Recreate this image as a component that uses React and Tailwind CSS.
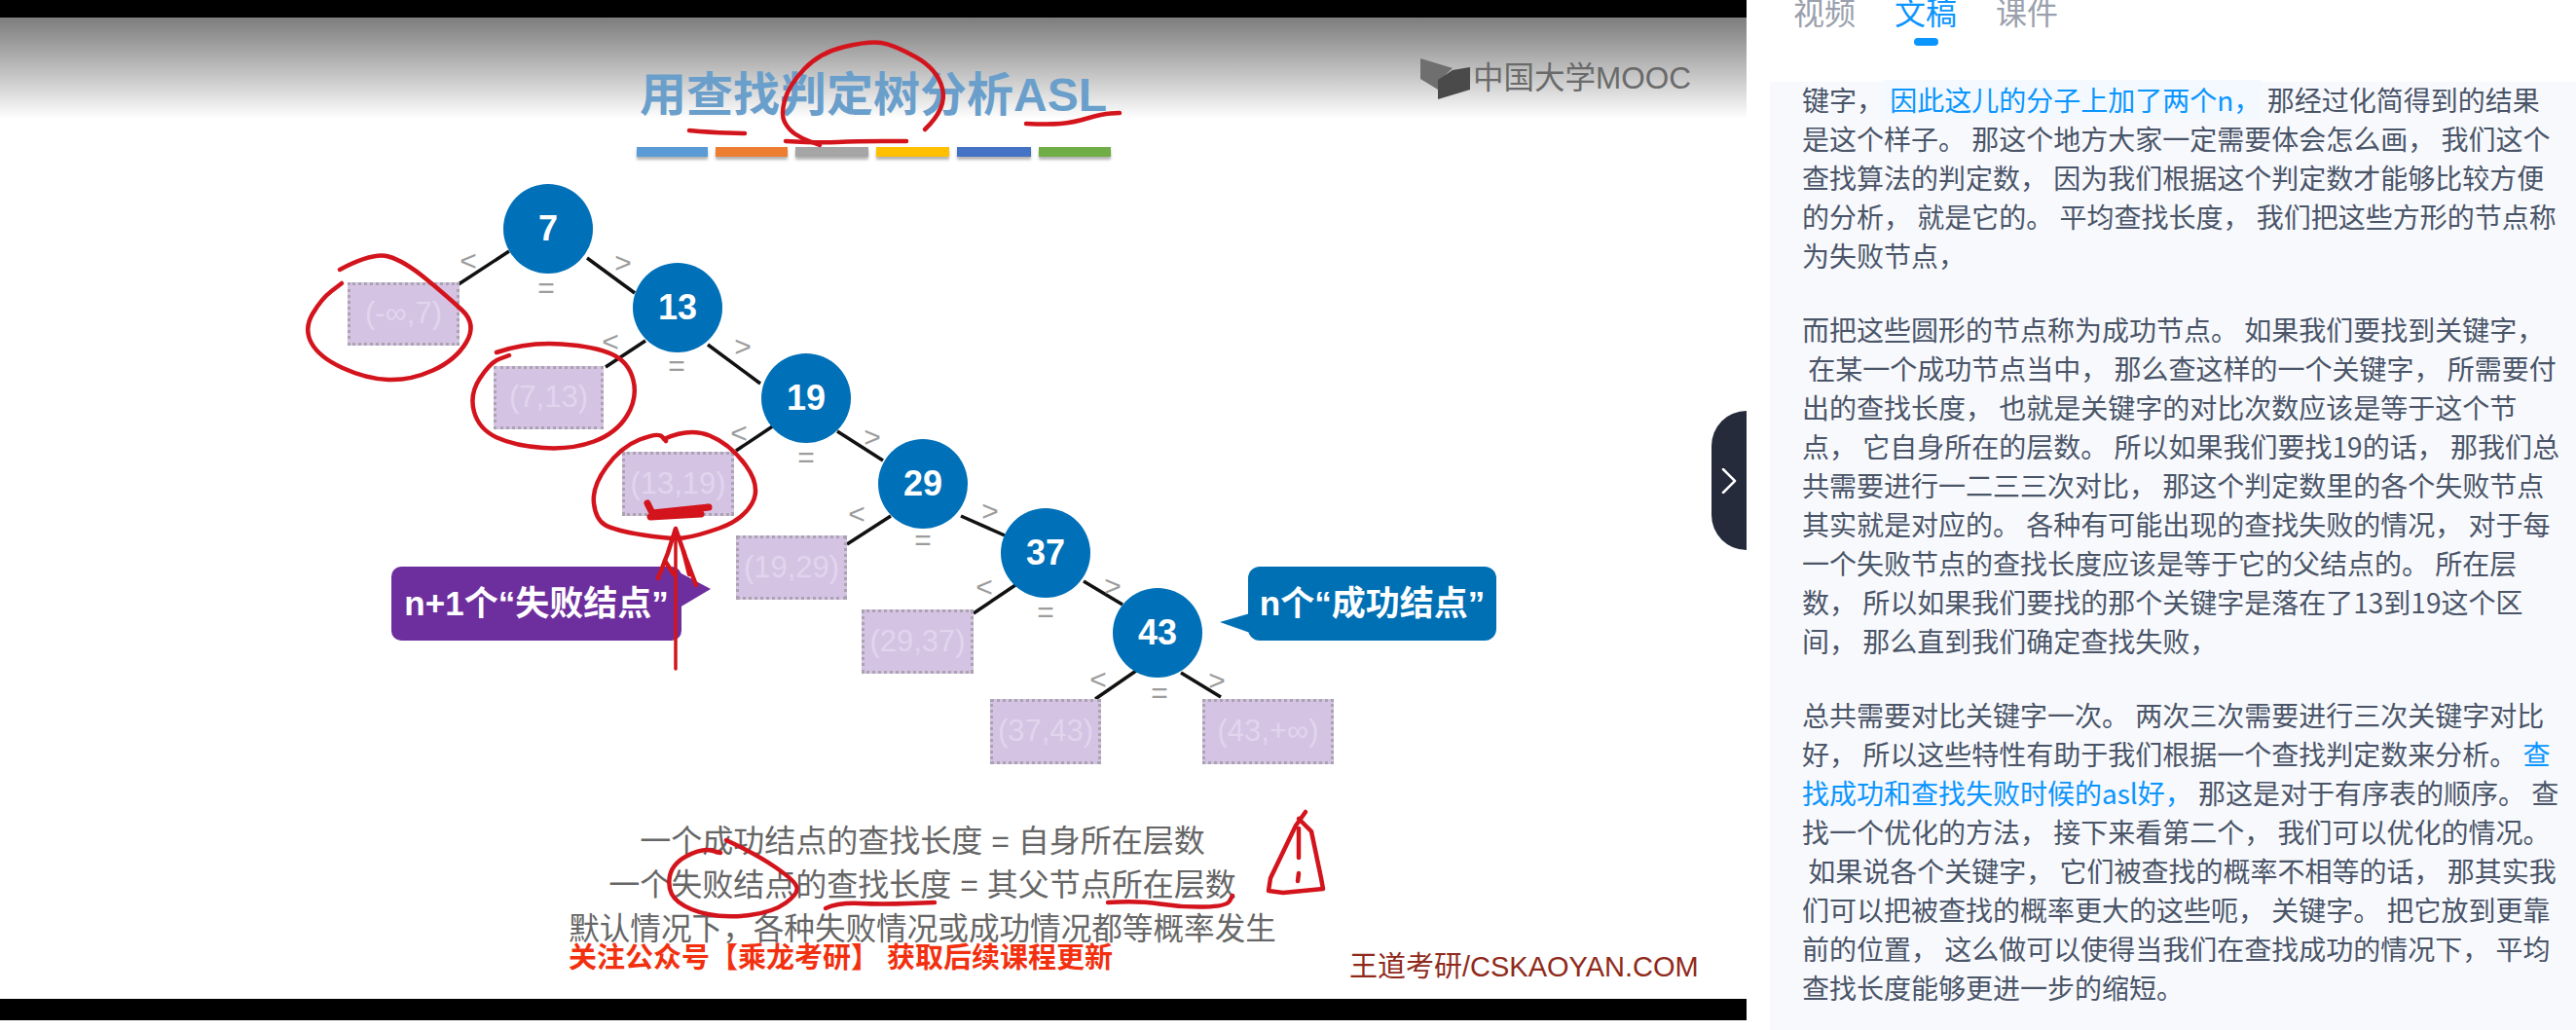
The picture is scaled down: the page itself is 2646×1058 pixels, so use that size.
import React from "react";

const cjk = "font-['Noto_Sans_CJK_SC',sans-serif]";
const arial = "font-['Liberation_Sans','Noto_Sans_CJK_SC',sans-serif]";

// Tree data, in page pixels
const nodes = [
  { label: "7", x: 563, y: 235 },
  { label: "13", x: 696, y: 316 },
  { label: "19", x: 828, y: 409 },
  { label: "29", x: 948, y: 497 },
  { label: "37", x: 1074, y: 568 },
  { label: "43", x: 1189, y: 650 },
];

const failBoxes = [
  { label: "(-∞,7)", x: 357, y: 290, w: 115, h: 65 },
  { label: "(7,13)", x: 507, y: 376, w: 113, h: 65 },
  { label: "(13,19)", x: 639, y: 464, w: 115, h: 66 },
  { label: "(19,29)", x: 756, y: 550, w: 114, h: 66 },
  { label: "(29,37)", x: 885, y: 626, w: 115, h: 66 },
  { label: "(37,43)", x: 1017, y: 718, w: 114, h: 67 },
  { label: "(43,+∞)", x: 1235, y: 718, w: 135, h: 67 },
];

const edges = [
  [523, 258, 471, 292],
  [603, 265, 652, 301],
  [663, 350, 622, 377],
  [727, 354, 781, 394],
  [795, 437, 756, 463],
  [860, 443, 907, 473],
  [915, 530, 870, 559],
  [987, 530, 1032, 550],
  [1043, 601, 1000, 630],
  [1113, 597, 1153, 621],
  [1167, 689, 1125, 718],
  [1213, 691, 1254, 716],
];

const signs = [
  ["<", 481, 268], [">", 640, 270], ["=", 561, 296],
  ["<", 627, 351], [">", 763, 356], ["=", 695, 376],
  ["<", 759, 445], [">", 896, 449], ["=", 828, 470],
  ["<", 880, 528], [">", 1017, 525], ["=", 948, 555],
  ["<", 1011, 603], [">", 1143, 602], ["=", 1074, 629],
  ["<", 1128, 698], [">", 1250, 699], ["=", 1191, 712],
];

// Red pen strokes on the slide
const ink = [
  [[950, 133], [973, 111], [963, 71], [918, 46], [893, 42], [842, 54], [810, 88], [802, 118], [810, 133], [823, 142], [842, 149]],
  [[807, 145], [840, 147], [880, 145], [931, 145]],
  [[708, 134], [730, 136], [765, 137]],
  [[1054, 127], [1077, 128], [1102, 126], [1132, 117], [1150, 116]],
  [[349, 277], [383, 259], [415, 268], [459, 304], [490, 333], [468, 370], [421, 391], [376, 389], [328, 367], [312, 338], [330, 307], [351, 291]],
  [[510, 362], [542, 351], [612, 356], [646, 372], [655, 409], [633, 445], [587, 462], [529, 458], [492, 441], [482, 405], [504, 372], [523, 365]],
  [[682, 451], [708, 439], [750, 456], [782, 500], [763, 534], [715, 551], [689, 554], [632, 545], [612, 534], [608, 500], [638, 459], [676, 444], [684, 453]],
  [[746, 863], [778, 878], [817, 905], [820, 918], [794, 937], [746, 943], [708, 935], [686, 918], [689, 888], [721, 871], [740, 876]],
  [[848, 933], [861, 927], [906, 929], [960, 927]],
  [[1138, 927], [1169, 925], [1214, 932], [1260, 931], [1266, 920]],
];

const smooth = (pts) => {
  let d = `M${pts[0][0]} ${pts[0][1]}`;
  for (let i = 1; i < pts.length - 1; i++) {
    const mx = (pts[i][0] + pts[i + 1][0]) / 2;
    const my = (pts[i][1] + pts[i + 1][1]) / 2;
    d += ` Q${pts[i][0]} ${pts[i][1]} ${mx} ${my}`;
  }
  const last = pts[pts.length - 1];
  return `${d} L${last[0]} ${last[1]}`;
};

const paragraphs = [
  [
    <>键字，<span className="bg-[#f3f9fe] text-[#0a95ff]"> 因此这儿的分子上加了两个n，</span> 那经过化简得到的结果</>,
    "是这个样子。 那这个地方大家一定需要体会怎么画， 我们这个",
    "查找算法的判定数， 因为我们根据这个判定数才能够比较方便",
    "的分析， 就是它的。 平均查找长度， 我们把这些方形的节点称",
    "为失败节点，",
  ],
  [
    "而把这些圆形的节点称为成功节点。 如果我们要找到关键字，",
    " 在某一个成功节点当中， 那么查这样的一个关键字， 所需要付",
    "出的查找长度， 也就是关键字的对比次数应该是等于这个节",
    "点， 它自身所在的层数。 所以如果我们要找19的话， 那我们总",
    "共需要进行一二三三次对比， 那这个判定数里的各个失败节点",
    "其实就是对应的。 各种有可能出现的查找失败的情况， 对于每",
    "一个失败节点的查找长度应该是等于它的父结点的。 所在层",
    "数， 所以如果我们要找的那个关键字是落在了13到19这个区",
    "间， 那么直到我们确定查找失败，",
  ],
  [
    "总共需要对比关键字一次。 两次三次需要进行三次关键字对比",
    <>好， 所以这些特性有助于我们根据一个查找判定数来分析。 <span className="text-[#0a95ff]">查</span></>,
    <><span className="text-[#0a95ff]">找成功和查找失败时候的asl好，</span> 那这是对于有序表的顺序。 查</>,
    "找一个优化的方法， 接下来看第二个， 我们可以优化的情况。",
    " 如果说各个关键字， 它们被查找的概率不相等的话， 那其实我",
    "们可以把被查找的概率更大的这些呃， 关键字。 把它放到更靠",
    "前的位置， 这么做可以使得当我们在查找成功的情况下， 平均",
    "查找长度能够更进一步的缩短。",
  ],
];

const barColors = ["bg-[#5b9bd5] w-[73px]", "bg-[#ed7d31] w-[74px]", "bg-[#a5a5a5] w-[75px]", "bg-[#ffc000] w-[75px]", "bg-[#4472c4] w-[76px]", "bg-[#70ad47] w-[74px]"];

const VideoPane = () => (
  <div className={`relative flex w-[1794px] flex-col ${arial}`}>
    <div className="h-[18px] bg-black" />
    <div className="flex flex-1 flex-col bg-white">
      <div className="h-[104px] bg-gradient-to-b from-[#7d7d7d] to-white" />
    </div>
    <div className="h-[22px] bg-black" />
    <div className="h-[10px] bg-white" />

    {/* slide title and colour bars */}
    <div className="absolute left-[657px] top-[66px] whitespace-nowrap text-[48px] font-bold leading-[64px] text-[#6a9fcb]">
      用查找判定树分析ASL
    </div>
    <div className="absolute left-[654px] top-[151px] flex gap-[8px]">
      {barColors.map((c) => (
        <div key={c} className={`h-[10px] shadow-[0_3px_3px_rgba(0,0,0,0.3)] ${c}`} />
      ))}
    </div>

    {/* MOOC logo */}
    <svg className="absolute left-[1459px] top-[60px] h-[42px] w-[51px]" viewBox="1463 60 51 42">
      <polygon points="1463,60 1496,70 1483,82 1481,92 1463,81" fill="#6f6f6f" />
      <polygon points="1514,69 1514,92 1481,102 1481,82 1496,72" fill="#4a4a4a" />
    </svg>
    <div className="absolute left-[1513px] top-[58px] whitespace-nowrap text-[31.5px] leading-[44px] text-[#6a6a6a]">
      中国大学MOOC
    </div>

    {/* tree edges and callout tails */}
    <svg className="absolute left-0 top-0 h-[1058px] w-[1794px]" viewBox="0 0 1794 1058">
      {edges.map(([x1, y1, x2, y2]) => (
        <line key={`${x1}-${y1}`} x1={x1} y1={y1} x2={x2} y2={y2} stroke="#111" strokeWidth="3.5" />
      ))}
      <polygon points="698,588 730,605 698,624" fill="#6e2f9e" />
      <polygon points="1284,630 1253,639 1284,650" fill="#0070b5" />
    </svg>

    {signs.map(([s, x, y]) => (
      <span
        key={`${s}${x}`}
        className="absolute -translate-x-1/2 -translate-y-1/2 text-[30px] leading-none text-[#9c9c9c]"
        style={{ left: x, top: y }}
      >
        {s}
      </span>
    ))}

    {nodes.map((n) => (
      <div
        key={n.label}
        className="absolute flex h-[92px] w-[92px] -translate-x-1/2 -translate-y-1/2 items-center justify-center rounded-full bg-[#0070b8] text-[36px] font-bold text-white"
        style={{ left: n.x, top: n.y }}
      >
        {n.label}
      </div>
    ))}

    {failBoxes.map((b) => (
      <div
        key={b.label}
        className="absolute flex items-center justify-center whitespace-nowrap border-[3px] border-dotted border-[#aaa3b0] bg-[#d5c3e4] text-[31px] text-[#e1d5ee]"
        style={{ left: b.x, top: b.y, width: b.w, height: b.h }}
      >
        {b.label}
      </div>
    ))}

    <div className="absolute left-[402px] top-[582px] flex h-[76px] w-[298px] items-center justify-center rounded-[10px] bg-[#6e2f9e] text-[35px] font-bold text-white">
      n+1个“失败结点”
    </div>
    <div className="absolute left-[1282px] top-[582px] flex h-[76px] w-[255px] items-center justify-center rounded-[12px] bg-[#0070b5] text-[35px] font-bold text-white">
      n个“成功结点”
    </div>

    {/* captions */}
    <div className="absolute left-[584px] top-[842px] flex w-[727px] flex-col items-center text-[32px] leading-[45px] text-[#666]">
      <div className="whitespace-nowrap">一个成功结点的查找长度 = 自身所在层数</div>
      <div className="whitespace-nowrap">一个失败结点的查找长度 = 其父节点所在层数</div>
      <div className="whitespace-nowrap text-[31.6px]">默认情况下，各种失败情况或成功情况都等概率发生</div>
    </div>
    <div className="absolute left-[584px] top-[964px] whitespace-nowrap text-[29px] font-bold leading-[40px] text-[#f2300f]">
      关注公众号【乘龙考研】 获取后续课程更新
    </div>
    <div className="absolute left-[1386px] top-[973px] whitespace-nowrap text-[29px] leading-[40px] text-[#8f2a1a]">
      王道考研/CSKAOYAN.COM
    </div>

    {/* red pen annotations */}
    <svg className="absolute left-0 top-0 h-[1058px] w-[1794px]" viewBox="0 0 1794 1058" fill="none" stroke="#d3141c" strokeLinecap="round" strokeLinejoin="round">
      {ink.map((pts) => (
        <path key={`${pts[0][0]}-${pts[0][1]}`} d={smooth(pts)} strokeWidth="4.5" />
      ))}
      <path d="M665 517 L670 527 L728 521 L690 526 L668 531 L720 528" strokeWidth="7" />
      <path d="M694 543 L694 687" strokeWidth="3.5" />
      <path d="M676 594 L686 568 L694 543 L704 572 L715 601" strokeWidth="4.5" />
      <path d="M683 576 L692 590 M702 566 L708 590" strokeWidth="4.5" />
      <path d="M1341 834 L1331 848 L1305 902 L1303 915 L1318 917 L1359 913 L1357 902 L1347 854 L1334 841" strokeWidth="4.5" />
      <path d="M1334 851 L1334 881 M1334 897 L1333 905" strokeWidth="4.5" />
    </svg>

    {/* collapse handle */}
    <div className="absolute right-0 top-[422px] flex h-[143px] w-[36px] items-center justify-center rounded-l-[36px] bg-[#252b3a]">
      <svg width="16" height="26" viewBox="0 0 16 26" fill="none" stroke="white" strokeWidth="2.5" strokeLinecap="round" strokeLinejoin="round">
        <path d="M2 1 L14 13 L2 25" />
      </svg>
    </div>
  </div>
);

const TranscriptPane = () => (
  <div className={`ml-[24px] flex flex-1 flex-col overflow-hidden ${cjk}`}>
    <div className="flex h-[84px] shrink-0 gap-[40px] pl-[24px] text-[32px] leading-[32px] text-[#9aa1ad]">
      <div className="-mt-[5px]">视频</div>
      <div className="-mt-[5px] flex flex-col items-center text-[#0a95ff]">
        <span>文稿</span>
        <span className="mt-[12px] h-[8px] w-[25px] rounded-full bg-[#0a95ff]" />
      </div>
      <div className="-mt-[5px]">课件</div>
    </div>
    <div className="flex-1 bg-[#f8f9fd] pl-[33px] text-[28px] leading-[40px] text-[#4a5568]">
      <div className="-mt-[2px] flex flex-col gap-[36px]">
        {paragraphs.map((lines, i) => (
          <div key={i}>
            {lines.map((line, j) => (
              <div key={j} className="whitespace-pre">
                {line}
              </div>
            ))}
          </div>
        ))}
      </div>
    </div>
  </div>
);

const App = () => {
  return (
    <div className="flex h-[1058px] w-[2646px] overflow-hidden bg-white">
      <VideoPane />
      <TranscriptPane />
    </div>
  );
};

export default App;
